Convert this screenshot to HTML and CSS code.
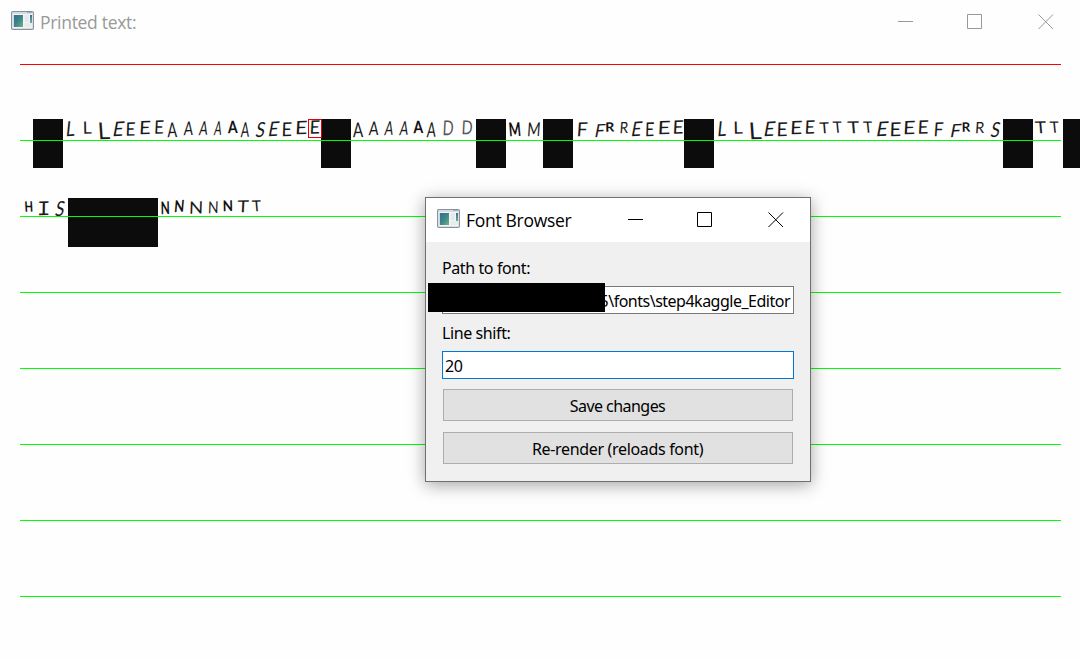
FILE: index.html
```html
<!DOCTYPE html>
<html lang="en">
<head>
<meta charset="utf-8">
<title>Printed text:</title>
<link rel="stylesheet" href="styles.css">
</head>
<body>
<svg class="defs" width="0" height="0">
  <defs>
    <linearGradient id="pane" x1="0" y1="0" x2="1" y2="1"><stop offset="0" stop-color="#2f7287"/><stop offset=".5" stop-color="#3e858b"/><stop offset="1" stop-color="#68b584"/></linearGradient>
    <linearGradient id="strip" x1="0" y1="0" x2="0" y2="1"><stop offset="0" stop-color="#3b6c9c"/><stop offset="1" stop-color="#63b389"/></linearGradient>
    <symbol id="app" viewBox="0 0 23 19">
      <rect x=".6" y=".6" width="21.8" height="17.8" rx="1.2" fill="#f3f4f6" stroke="#8b929a" stroke-width="1.2"/>
      <path d="M2 2.2h19" stroke="#d3d9e2" stroke-width="1.4"/><path d="M16 1.5h5" stroke="#9fb0c5"/>
      <rect x="2.8" y="4" width="9.2" height="12" fill="url(#pane)"/>
      <rect x="13.7" y="4" width="4" height="7" fill="#e6e7ea"/><rect x="13.7" y="12" width="7" height="4" fill="#e9eaed"/>
      <rect x="19" y="4" width="2" height="8" fill="url(#strip)"/>
    </symbol>
  </defs>
</svg>
<main class="window">
  <header class="titlebar">
    <svg class="app-icon"><use href="#app"/></svg>
    <h1 class="title">Printed text:</h1>
    <svg class="controls" width="156" height="16" fill="none" stroke="currentColor"><path d="M0 7.5h15M69.5.5h14v14h-14z"/><path d="M140.500 .5l14.500 14.500M155 .5l-14.500 14.500"/></svg>
  </header>
  <svg class="page" width="1080" height="616" viewBox="0 44 1080 616">
    <g id="ink"></g>
    <path class="margin" d="M20 64.5h1041"/>
    <path class="rules" d="M20 140.500h1041M20 216.500h1041M20 292.500h1041M20 368.500h1041M20 444.500h1041M20 520.500h1041M20 596.500h1041"/>
    <rect class="selection" x="308.500" y="119.500" width="13" height="18"/>
  </svg>
</main>
<section class="dialog">
  <header class="dialog-bar">
    <svg class="app-icon"><use href="#app"/></svg>
    <h2 class="title">Font Browser</h2>
    <svg class="controls" width="156" height="16" fill="none" stroke="currentColor"><path d="M0 7.5h15M69.5.5h14v14h-14z"/><path d="M140.500 .5l14.500 14.500M155 .5l-14.500 14.500"/></svg>
  </header>
  <div class="form">
    <div class="label"><span>Path to font:</span></div>
    <div class="field path"><span>5\fonts\step4kaggle_Editor</span><i class="redaction"></i></div>
    <div class="label"><span>Line shift:</span></div>
    <div class="field active"><span>20</span></div>
    <div class="button first"><span>Save changes</span></div>
    <div class="button wide"><span>Re-render (reloads font)</span></div>
  </div>
</section>
<script src="ink.js"></script>
</body>
</html>
```
FILE: styles.css
```css
* { box-sizing: border-box; }
body { margin: 0; width: 1080px; height: 660px; overflow: hidden; background: #fefefe; color: #000; font: 16px/20px "Noto Sans", "Open Sans", sans-serif; }
.defs { position: absolute; }
.window { display: flex; flex-direction: column; background: #fefefe; }
.titlebar { display: flex; align-items: flex-start; height: 44px; padding: 11px 26px 0 11px; color: #999; }
.app-icon { width: 23px; height: 19px; flex: none; }
.title { margin: -1px 0 0 6px; font-family: "Open Sans", "Noto Sans", sans-serif; font-size: 17.5px; font-weight: 400; line-height: 24px; white-space: nowrap; letter-spacing: -.3px; }
.controls { margin: 3px 0 0 auto; flex: none; }
.page { display: block; }
.page text { font-family: Lato, sans-serif; fill: #1b1b1b; }
.page .bold { font-weight: 700; fill: #111; }
.page .faint { fill: #555; }
.page .serif { font-family: "Liberation Mono", monospace; }
.block { fill: #0c0c0c; }
.margin { stroke: #f00; }
.rules { stroke: #0f0; }
.selection { fill: none; stroke: #e60000; }
.dialog { position: absolute; left: 425px; top: 197px; width: 386px; height: 285px; background: #f0f0f0; border: 1px solid #707070; box-shadow: 0 3px 16px rgba(0,0,0,.36); }
.dialog-bar { display: flex; align-items: flex-start; height: 44px; padding: 11px 26px 0 11px; background: #fff; }
.form { display: flex; flex-direction: column; padding: 16px 16px 0; }
.label { height: 28px; white-space: nowrap; letter-spacing: -.4px; }
.field { display: flex; align-items: center; height: 28px; padding: 2px 3px 0 2px; margin-bottom: 9px; background: #fff; border: 1px solid #7a7a7a; white-space: nowrap; letter-spacing: -.5px; }
.path { position: relative; justify-content: flex-end; }
.redaction { position: absolute; left: -15px; top: -4px; width: 177px; height: 29px; background: #000; }
.active { border-color: #0078d7; margin-bottom: 10px; }
.button { display: flex; align-items: center; justify-content: center; height: 32px; margin: 0 1px 11px; padding: 2px 1px 0 0; background: #e1e1e1; border: 1px solid #adadad; white-space: nowrap; letter-spacing: -.55px; }
.wide { letter-spacing: -.33px; }
```
FILE: ink.js
```javascript
// Each glyph: character, left, right, top, baseline, slant in degrees, style
const glyphs = [
  ["L",66,74.5,122,136,-9],["L",83.5,91,122,133.5,0],["L",99,109,123,139,3],
  ["E",112.5,123,122.5,136,-14],["E",126,134.5,123,135.5,-3],["E",139.5,149.5,121.5,134,-4],["E",154.5,163,121,133.5,-4],
  ["A",167.5,176.5,123,137,0],["A",183.5,192.5,122,135,-4],["A",198.5,207.5,122,135,-10],["A",213.5,221.5,122,135,-10],
  ["A",228,237,121.5,133,0,"bold"],["A",240.5,249,123,137,-6],["S",255.5,264.5,123,137,-14],
  ["E",268,278,122.5,136,-14],["E",282,291,123,136,-3],["E",295.5,306,121.5,134,-4],["E",310,319,121,133.5,-4],
  ["A",353,362.5,123,137,0],["A",368.5,378,122,135,-4],["A",384,393,122,135,-10],["A",399,408,122,135,-10],
  ["A",413.5,422.5,121.5,133,0,"bold"],["A",426.5,435.5,123,137,-6],["D",443,452.5,121,135,-4,"faint"],["D",462,471.5,121,134,-4,"faint"],
  ["M",510,520,123,136,4,"bold"],["M",527.5,539,123,136,-5],
  ["F",577,586.5,123,136,-5],["F",594.5,604,125,137,-14],["R",606,613.5,123,131.5,0,"bold"],["R",620,627.5,122.5,133,-5],
  ["E",631,641,122.5,136,-14],["E",645.5,653.5,123,136,-3],["E",658,669,121.5,134,-4],["E",673,682.5,121,133.5,-4],
  ["L",717.5,726,122,136,-9],["L",734,742,122,133.5,0],["L",750,760.5,123,139,3],
  ["E",763.5,774,122.5,136,-14],["E",777,786.5,123,136,-3],["E",790.5,801,121.5,134,-4],["E",805,814,121,133.5,-4],
  ["T",820,829,123,133,4],["T",833.5,842,122,132.5,5],["T",848,859,122,133,4],["T",864,872.5,122,132.5,5],
  ["E",876,887,122.5,136,-14],["E",890,900,123,136,-3],["E",903.5,914,121.5,134,-4],["E",918,927.5,121,133.5,-4],
  ["F",934,942.5,123,136,-5],["F",950,960,125,137,-14],["R",962.5,969.5,123,131.5,0,"bold"],["R",975.5,983.5,122.5,133,-5],["S",990.5,999.5,123,137,-14],
  ["T",1035.5,1046,122,133,4],["T",1050.5,1059,122,132.5,5],
  ["H",25.5,32.5,202,211.5,2,"bold"],["I",37.5,49,202,215,-2,"serif"],["S",55,64,202,216,-14],
  ["N",161.5,169,202,214,0,"bold"],["N",174.5,183.5,201,212,-8,"bold"],["N",189.5,201.5,202,213.5,-3],["N",208.5,217.5,202,213,-3],
  ["N",223.5,232,201,211,0,"bold"],["T",237,248,201,212,-4],["T",252.5,261,201,211,4]
];
const blocks = [[33,119,30],[321,119,30],[476,119,30],[543,119,30],[684,119,30],[1003,119,30],[1063,119,30],[68,198,90]];

const ink = document.getElementById("ink");
function add(name, attrs, text) {
  const node = document.createElementNS("http://www.w3.org/2000/svg", name);
  for (const key in attrs) node.setAttribute(key, attrs[key]);
  if (text) node.textContent = text;
  ink.appendChild(node);
}
for (const [char, left, right, top, base, slant, style] of glyphs) {
  const tight = char === "A" || char === "T";
  // A slanted glyph leans past its box, so its advance is narrowed by part of the lean
  const lean = Math.max(0, -Math.tan(slant * Math.PI / 180) * (base - top));
  const width = (right - left - lean * 0.45) * (tight ? 1.08 : 1.22);
  add("text", {
    class: style || "plain",
    "font-size": (base - top + 0.8) / (style === "serif" ? 0.66 : 0.72),
    textLength: Math.max(width, 6.5),
    lengthAdjust: "spacingAndGlyphs",
    transform: `translate(${left - (tight ? 0 : 0.8)} ${base + 0.3}) rotate(${slant < -5 ? -3 : -1}) skewX(${slant})`
  }, char);
}
for (const [x, y, width] of blocks) add("rect", { class: "block", x, y, width, height: 49 });
```
